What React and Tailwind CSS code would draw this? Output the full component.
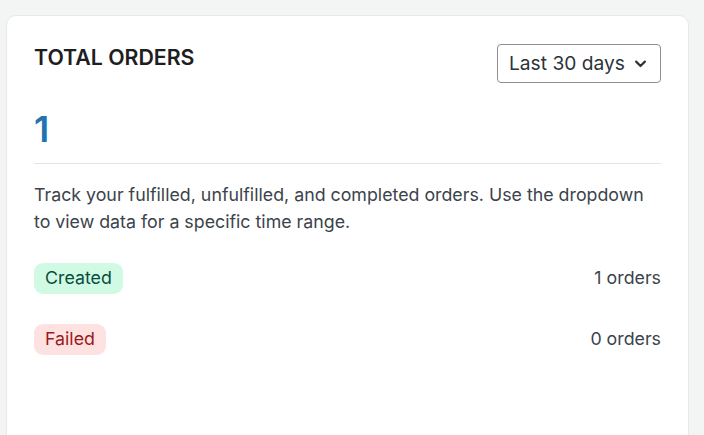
export default function App() {
  return (
    <div className="w-[704px] h-[435px] overflow-hidden bg-[#f3f4f4] pt-[15px] pl-[6px] pr-[15px]" style={{ fontFamily: "Inter, 'Noto Sans', sans-serif" }}>
      <div className="h-[440px] bg-white rounded-[10px] border border-[#e6e8ea] pl-[27px] pr-[27px] pt-[28px]">
        <div className="flex items-start justify-between">
          <h2 className="text-[21.3px] leading-[28px] font-semibold text-[#1e1e1e] mt-[-1px]">TOTAL ORDERS</h2>
          <button className="h-[39px] w-[164px] border border-[#8c8f94] rounded-[4px] flex items-center pl-[11px] pr-[12px] gap-[8px] text-[19.2px] text-[#2c3338]">
            <span>Last 30 days</span>
            <svg width="15" height="15" viewBox="0 0 24 24" fill="none" stroke="#2c3338" strokeWidth="3.4" strokeLinecap="round" strokeLinejoin="round"><path d="M5 9l7 7 7-7" /></svg>
          </button>
        </div>
        <div className="mt-[26px] text-[36px] leading-[40px] font-semibold text-[#2271b1]">1</div>
        <div className="mt-[14px] h-px bg-[#e2e4e7]" />
        <p className="mt-[17px] text-[17.8px] leading-[27px] text-[#3c434a]">
          Track your fulfilled, unfulfilled, and completed orders. Use the dropdown to view data for a specific time range.
        </p>
        <div className="mt-[28px] flex flex-col gap-[30px]">
          <div className="flex items-center justify-between">
            <span className="h-[31px] px-[11px] rounded-[9px] bg-[#d1fae5] text-[#064e3b] text-[17.8px] flex items-center">Created</span>
            <span className="text-[17.8px] text-[#3c434a]">1 orders</span>
          </div>
          <div className="flex items-center justify-between">
            <span className="h-[31px] px-[11px] rounded-[9px] bg-[#fee2e2] text-[#991b1b] text-[17.8px] flex items-center">Failed</span>
            <span className="text-[17.8px] text-[#3c434a]">0 orders</span>
          </div>
        </div>
      </div>
    </div>
  );
}
